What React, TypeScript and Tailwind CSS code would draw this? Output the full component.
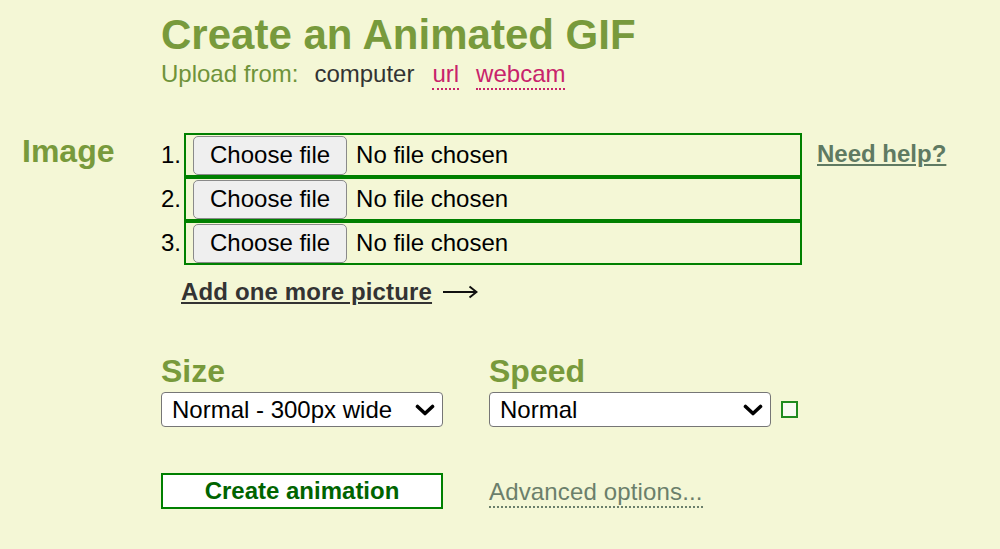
import React from 'react';

const olive = 'text-[#789a3c]';

function FileRow({ n }: { n: number }) {
  return (
    <div className="flex items-center h-[44px]">
      <span className="w-[23px] text-[24px] leading-none text-black">{n}.</span>
      <div className="w-[618px] h-[44px] border-2 border-[#008000] flex items-center">
        <button
          type="button"
          className="ml-[7px] h-[39px] px-[16px] bg-[#efefef] border border-[#8a8a8a] rounded-[5px] text-[24px] leading-none text-black"
        >
          Choose file
        </button>
        <span className="ml-[9px] text-[24px] leading-none text-black">No file chosen</span>
      </div>
    </div>
  );
}

function FakeSelect({ value }: { value: string }) {
  return (
    <div className="w-[282px] h-[35px] bg-white border border-[#767676] rounded-[4px] flex items-center justify-between pl-[10px] pr-[7px]">
      <span className="text-[24px] leading-none text-black">{value}</span>
      <svg width="20" height="12" viewBox="0 0 20 12" fill="none">
        <path d="M2.5 2.5l7.5 7 7.5-7" stroke="#000" strokeWidth="3.6" strokeLinecap="round" strokeLinejoin="round" />
      </svg>
    </div>
  );
}

export default function App() {
  return (
    <div className="min-h-screen bg-[#f4f7d6] font-['Liberation_Sans',Arial,sans-serif] overflow-hidden">
      <div className="pl-[161px] pt-[14px]">
        <h1 className={`text-[42px] leading-none font-bold ${olive}`}>Create an Animated GIF</h1>
        <div className="mt-[6px] flex items-start text-[24px] leading-none">
          <span className="text-[#6f933a]">Upload from:</span>
          <span className="ml-[16px] text-[#333]">computer</span>
          <span className="ml-[18px] pb-[2px] border-b-2 border-dotted border-[#c8236b] text-[#c8236b]">url</span>
          <span className="ml-[17px] pb-[2px] border-b-2 border-dotted border-[#c8236b] text-[#c8236b]">webcam</span>
        </div>
      </div>

      <div className="mt-[43px] flex items-start">
        <div className="w-[161px] pl-[22px] pt-[2px]">
          <h2 className={`text-[32px] leading-none font-bold ${olive}`}>Image</h2>
        </div>
        <div className="flex flex-col">
          <FileRow n={1} />
          <FileRow n={2} />
          <FileRow n={3} />
        </div>
        <a href="#" className="ml-[15px] mt-[9px] text-[24px] leading-none font-bold text-[#5f7a62] underline">
          Need help?
        </a>
      </div>

      <div className="mt-[15px] ml-[181px] flex items-center">
        <a href="#" className="text-[24px] leading-none font-bold text-[#333] underline tracking-[0.15px]">
          Add one more picture
        </a>
        <svg className="ml-[10px]" width="36" height="14" viewBox="0 0 36 14" fill="none">
          <path d="M1 7H34M27.5 1.5L34.5 7l-7 5.5" stroke="#111" strokeWidth="2" />
        </svg>
      </div>

      <div className="mt-[51px] ml-[161px] flex items-start gap-[46px]">
        <div className="flex flex-col">
          <h2 className={`text-[32px] leading-none font-bold ${olive}`}>Size</h2>
          <div className="mt-[5px]">
            <FakeSelect value="Normal - 300px wide" />
          </div>
        </div>
        <div className="flex flex-col">
          <h2 className={`text-[32px] leading-none font-bold ${olive}`}>Speed</h2>
          <div className="mt-[5px] flex items-center">
            <FakeSelect value="Normal" />
            <span className="ml-[10px] w-[17px] h-[17px] border-2 border-[#1f8a1f] bg-[#f8faf3]" />
          </div>
        </div>
      </div>

      <div className="mt-[46px] ml-[161px] flex items-start gap-[46px]">
        <button
          type="button"
          className="w-[282px] h-[36px] bg-white border-2 border-[#008000] text-[24px] leading-none font-bold text-[#006400]"
        >
          Create animation
        </button>
        <a href="#" className="mt-[7px] pb-[2px] border-b-2 border-dotted border-[#6b7f6b] text-[24px] leading-none text-[#6b7f6b] tracking-[0.15px]">
          Advanced options...
        </a>
      </div>
    </div>
  );
}
